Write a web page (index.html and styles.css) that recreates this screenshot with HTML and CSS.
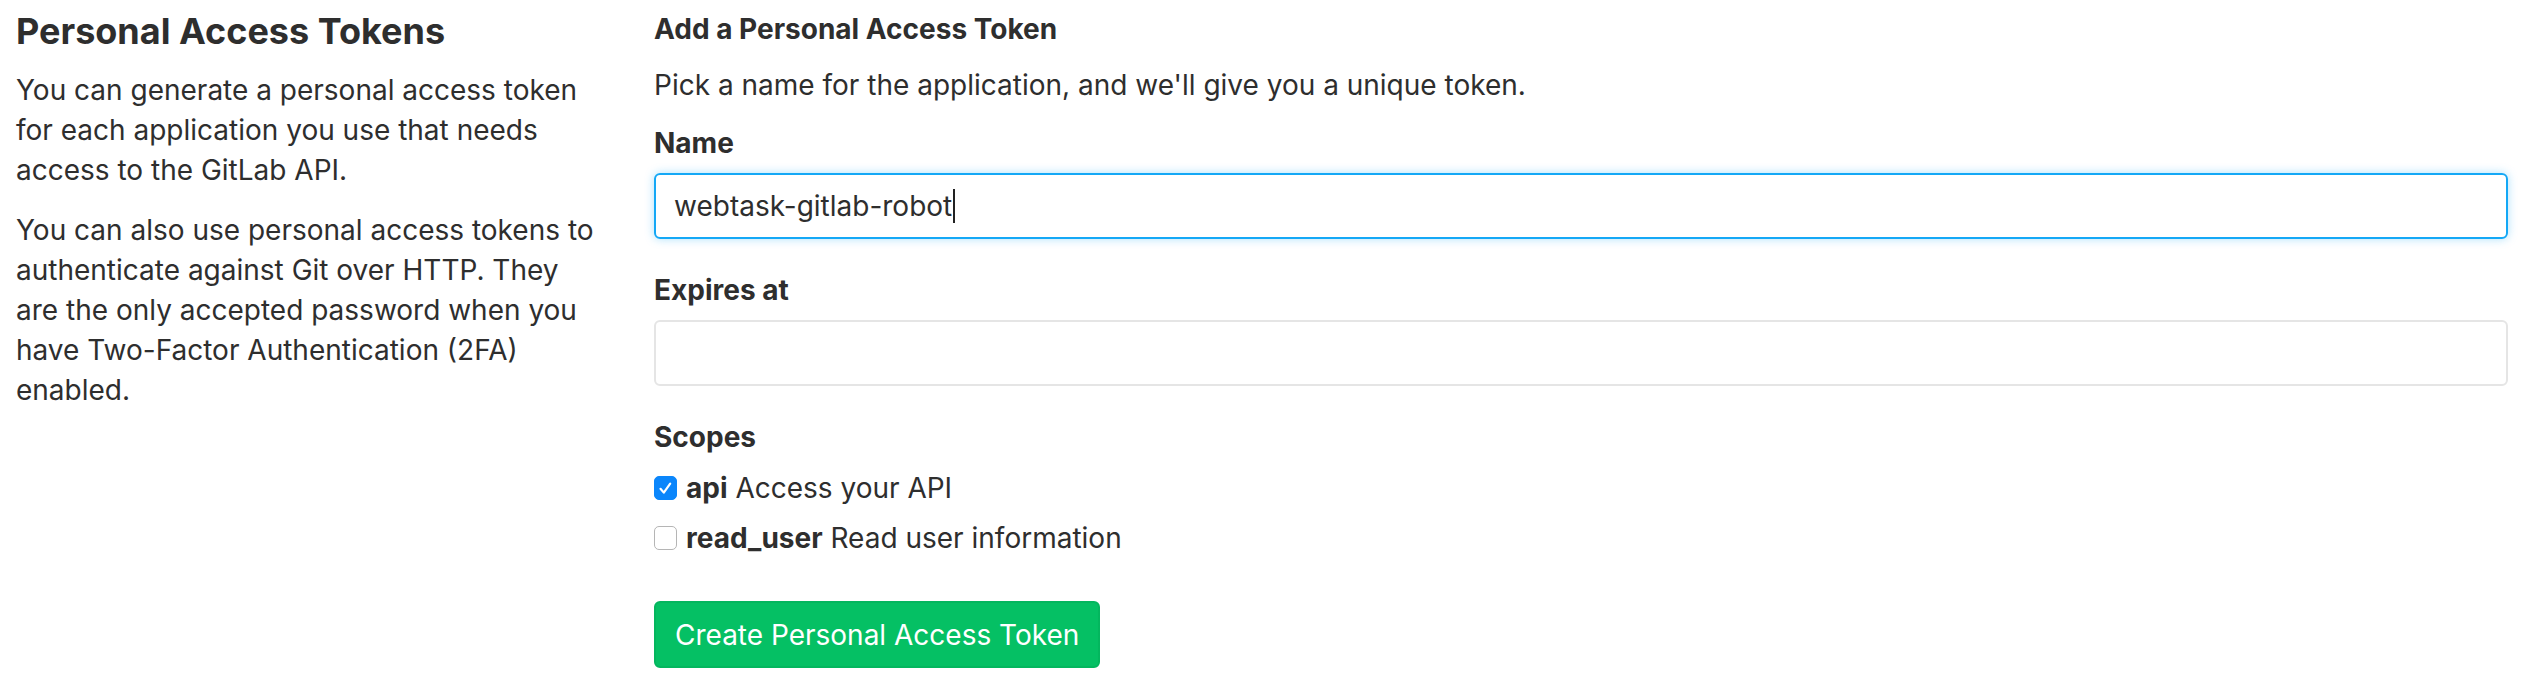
FILE: index.html
```html
<!DOCTYPE html>
<html>
<head>
<meta charset="utf-8">
<link rel="stylesheet" href="styles.css">
</head>
<body>
<div class="page">
  <div class="sidebar">
    <h4 class="title">Personal Access Tokens</h4>
    <p>You can generate a personal access token for each application you use that needs access to the GitLab API.</p>
    <p>You can also use personal access tokens to authenticate against Git over HTTP. They are the only accepted password when you have Two-Factor Authentication (2FA) enabled.</p>
  </div>
  <div class="main">
    <h5 class="subtitle">Add a Personal Access Token</h5>
    <p class="lead">Pick a name for the application, and we'll give you a unique token.</p>
    <div class="form-group">
      <label class="label">Name</label>
      <div class="input focused"><span>webtask-gitlab-robot</span><span class="caret"></span></div>
    </div>
    <div class="form-group">
      <label class="label">Expires at</label>
      <div class="input"></div>
    </div>
    <div class="form-group scopes">
      <label class="label">Scopes</label>
      <div class="check-row"><span class="cbox checked"><svg viewBox="0 0 23 24" width="23" height="24"><path d="M6.5 12.8 L9.8 16.6 L16.2 7.6" fill="none" stroke="#fff" stroke-width="2.2" stroke-linecap="round" stroke-linejoin="round"/></svg></span><span class="scope-text"><b>api</b> Access your API</span></div>
      <div class="check-row"><span class="cbox"></span><span class="scope-text"><b>read_user</b> Read user information</span></div>
    </div>
    <button class="btn-create">Create Personal Access Token</button>
  </div>
</div>
</body>
</html>
```

FILE: styles.css
```css
body {
  margin: 0;
  background: #fff;
  color: #2e2e2e;
  font-family: Inter, "Liberation Sans", sans-serif;
}
.page {
  display: flex;
  gap: 60px;
  padding: 12px 26px 0 16px;
}
.sidebar {
  width: 578px;
  flex: none;
}
.title {
  font-size: 36px;
  font-weight: 700;
  line-height: 38px;
  margin: 0 0 20px;
}
.sidebar p {
  font-size: 28px;
  line-height: 40px;
  margin: 0 0 20px;
}
.main {
  flex: 1;
}
.subtitle {
  font-size: 28px;
  font-weight: 700;
  line-height: 31px;
  margin: 2px 0 20px;
}
.lead {
  font-size: 28px;
  line-height: 40px;
  margin: 0 0 18px;
}
.label {
  display: block;
  font-size: 28px;
  font-weight: 700;
  line-height: 40px;
  margin-bottom: 10px;
}
.form-group {
  margin-bottom: 31px;
}
.input {
  height: 66px;
  box-sizing: border-box;
  border: 2px solid #e5e5e5;
  border-radius: 6px;
  padding: 0 18px;
  display: flex;
  align-items: center;
  font-size: 28px;
}
.input.focused {
  border-color: #14a8f6;
  box-shadow: 0 0 10px rgba(20, 168, 246, 0.35);
}
.caret {
  width: 2px;
  height: 34px;
  background: #222;
  margin-left: 1px;
}
.scopes {
  margin-bottom: 43px;
}
.scopes .label {
  margin-bottom: 11px;
}
.check-row {
  display: flex;
  align-items: center;
  height: 40px;
  font-size: 28px;
  margin-bottom: 10px;
}
.cbox {
  width: 23px;
  height: 24px;
  box-sizing: border-box;
  border: 1.5px solid #b5b5b5;
  border-radius: 5px;
  margin-right: 9px;
  flex: none;
  display: flex;
}
.cbox.checked {
  background: #0b86fb;
  border-color: #0b86fb;
}
.cbox.checked svg {
  margin: -1.5px;
}
.btn-create {
  height: 67px;
  padding: 0 19px;
  font-family: inherit;
  font-size: 28px;
  color: #fff;
  background: #05c064;
  border: 2px solid #04b65e;
  border-radius: 6px;
}
```
